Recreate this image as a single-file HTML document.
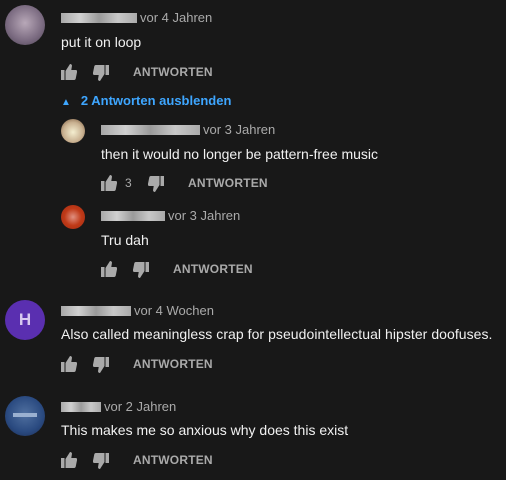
<!DOCTYPE html><html><head><style>
body{margin:0;width:506px;height:480px;background:#181818;font-family:"Liberation Sans",Arial,sans-serif;position:relative;overflow:hidden}
.a{position:absolute;line-height:16px;white-space:nowrap}
.m{font-size:13px;color:#aaa}
.t{font-size:14px;color:#f1f1f1}
.b{font-size:12px;font-weight:bold;color:#aaa;letter-spacing:.2px}
.n{display:inline-block;height:10px;vertical-align:-1px;margin-right:3px;background:linear-gradient(90deg,#a8a8a8,#d0d0d0,#9a9a9a,#c8c8c8,#aaa)}
.av{position:absolute;border-radius:50%}
svg{position:absolute}
</style></head><body>
<svg width="0" height="0"><defs>
<g id="up"><path fill="#aaa" d="M0 6h3.5v10H0z M4.5 16V7l4.5-7c1.4 0 2.2 1 1.9 2.3L10.3 6h4.4c1 0 1.6.9 1.4 1.8l-1.4 7c-.2.7-.8 1.2-1.5 1.2z"/></g>
<g id="dn"><path fill="#aaa" d="M12.5 0h3.5v10h-3.5z M11.5 0v9l-4.5 7c-1.4 0-2.2-1-1.9-2.3L5.7 10H1.3C.3 10-.3 9.1-.1 8.2l1.4-7C1.5.5 2.1 0 2.8 0z"/></g>
</defs></svg>

<div class="av" style="left:5px;top:5px;width:40px;height:40px;background:radial-gradient(circle at 50% 45%,#b8a8b8,#7a6a80 60%,#4a4050)"></div>
<div class="a m" style="left:61px;top:10px"><span class="n" style="width:76px"></span>vor 4 Jahren</div>
<div class="a t" style="left:61px;top:34px">put it on loop</div>
<svg style="left:61px;top:64px" width="16" height="16"><use href="#up"/></svg>
<svg style="left:93px;top:65px" width="16" height="16"><use href="#dn"/></svg>
<div class="a b" style="left:133px;top:64px">ANTWORTEN</div>
<div class="a" style="left:61px;top:93px;font-size:13px;font-weight:bold;color:#3ea6ff"><span style="font-size:10px;margin-right:10px">▲</span>2 Antworten ausblenden</div>

<div class="av" style="left:61px;top:119px;width:24px;height:24px;background:radial-gradient(circle at 50% 55%,#f4eed0,#c8b090 55%,#6a4a30)"></div>
<div class="a m" style="left:101px;top:122px"><span class="n" style="width:99px"></span>vor 3 Jahren</div>
<div class="a t" style="left:101px;top:146px">then it would no longer be pattern-free music</div>
<svg style="left:101px;top:175px" width="16" height="16"><use href="#up"/></svg>
<div class="a m" style="left:125px;top:175px;font-size:12px">3</div>
<svg style="left:148px;top:176px" width="16" height="16"><use href="#dn"/></svg>
<div class="a b" style="left:188px;top:175px">ANTWORTEN</div>

<div class="av" style="left:61px;top:205px;width:24px;height:24px;background:radial-gradient(circle at 50% 50%,#e09080,#c03a18 50%,#a02a10)"></div>
<div class="a m" style="left:101px;top:208px"><span class="n" style="width:64px"></span>vor 3 Jahren</div>
<div class="a t" style="left:101px;top:232px">Tru dah</div>
<svg style="left:101px;top:261px" width="16" height="16"><use href="#up"/></svg>
<svg style="left:133px;top:262px" width="16" height="16"><use href="#dn"/></svg>
<div class="a b" style="left:173px;top:261px">ANTWORTEN</div>

<div class="av" style="left:5px;top:300px;width:40px;height:40px;background:#5a2fb0"></div>
<div class="a" style="left:5px;top:312px;width:40px;text-align:center;color:#d8c8f0;font-weight:bold;font-size:17px">H</div>
<div class="a m" style="left:61px;top:303px"><span class="n" style="width:70px"></span>vor 4 Wochen</div>
<div class="a t" style="left:61px;top:326px;letter-spacing:.05px">Also called meaningless crap for pseudointellectual hipster doofuses.</div>
<svg style="left:61px;top:356px" width="16" height="16"><use href="#up"/></svg>
<svg style="left:93px;top:357px" width="16" height="16"><use href="#dn"/></svg>
<div class="a b" style="left:133px;top:356px">ANTWORTEN</div>

<div class="av" style="left:5px;top:396px;width:40px;height:40px;background:radial-gradient(circle at 50% 45%,#5070a0,#2a4a80 60%,#1a2a50)"></div>
<div style="position:absolute;left:13px;top:413px;width:24px;height:4px;background:#9ab0d0"></div>
<div class="a m" style="left:61px;top:399px"><span class="n" style="width:40px"></span>vor 2 Jahren</div>
<div class="a t" style="left:61px;top:422px">This makes me so anxious why does this exist</div>
<svg style="left:61px;top:452px" width="16" height="16"><use href="#up"/></svg>
<svg style="left:93px;top:453px" width="16" height="16"><use href="#dn"/></svg>
<div class="a b" style="left:133px;top:452px">ANTWORTEN</div>
</body></html>
